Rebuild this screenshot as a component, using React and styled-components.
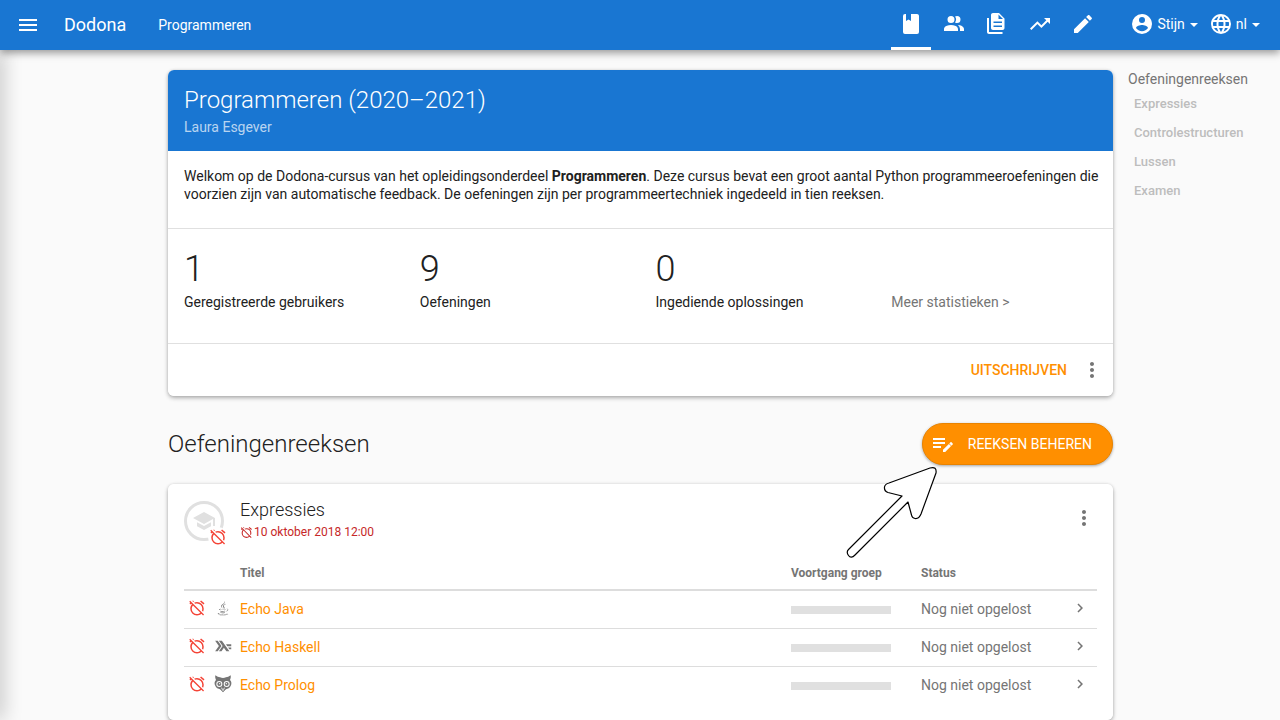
import React from "react";
import styled, { createGlobalStyle } from "styled-components";
import { MdMoreVert, MdChevronRight } from "react-icons/md";
import { DiJava } from "react-icons/di";

const GlobalStyle = createGlobalStyle`
  *, *::before, *::after { box-sizing: border-box; }
  html { overflow: hidden; height: 100%; }
  body {
    margin: 0;
    height: 100%;
    overflow: hidden;
    background: #fafafa;
    color: #212121;
    font: 14px/18px Roboto, sans-serif;
  }
  a { color: inherit; text-decoration: none; }
  button { font: inherit; border: 0; background: none; padding: 0; cursor: pointer; color: inherit; }
  h1, h2, h3, p, ul { margin: 0; padding: 0; font-weight: 400; list-style: none; }
  svg { display: block; flex: none; }
`;

const paths = {
  menu: "M3,6H21V8H3V6M3,11H21V13H3V11M3,16H21V18H3V16Z",
  book: "M18,22A2,2 0 0,0 20,20V4C20,2.89 19.1,2 18,2H12V9L9.5,7.5L7,9V2H6A2,2 0 0,0 4,4V20A2,2 0 0,0 6,22H18Z",
  users:
    "M16 17V19H2V17S2 13 9 13 16 17 16 17M12.5 7.5A3.5 3.5 0 1 0 9 11A3.5 3.5 0 0 0 12.5 7.5M15.94 13A5.32 5.32 0 0 1 18 17V19H22V17S22 13.37 15.94 13M15 4A3.39 3.39 0 0 0 13.07 4.59A5 5 0 0 1 13.07 10.41A3.39 3.39 0 0 0 15 11A3.5 3.5 0 0 0 15 4Z",
  files:
    "M14 1H8C6.900 1 6 1.900 6 3V16C6 17.100 6.900 18 8 18H17.500C18.600 18 19.500 17.100 19.500 16V6.500L14 1M17 15H8.500V13.500H17V15M17 11H8.500V9.500H17V11M13.500 7V2.500L18 7H13.500M2 6H4V20H17.500V22H4C2.900 22 2 21.100 2 20V6Z",
  trend:
    "M16,6L18.29,8.29L13.41,13.17L9.41,9.17L2,16.59L3.41,18L9.41,12L13.41,16L19.71,9.71L22,12V6H16Z",
  pencil:
    "M20.71,7.04C21.1,6.65 21.1,6 20.71,5.63L18.37,3.29C18,2.9 17.35,2.9 16.96,3.29L15.12,5.12L18.87,8.87M3,17.25V21H6.75L17.81,9.93L14.06,6.18L3,17.25Z",
  account:
    "M12,19.2C9.5,19.2 7.29,17.92 6,16C6.03,14 10,12.9 12,12.9C14,12.9 17.97,14 18,16C16.71,17.92 14.5,19.2 12,19.2M12,5A3,3 0 0,1 15,8A3,3 0 0,1 12,11A3,3 0 0,1 9,8A3,3 0 0,1 12,5M12,2A10,10 0 0,0 2,12A10,10 0 0,0 12,22A10,10 0 0,0 22,12C22,6.47 17.5,2 12,2Z",
  web: "M16.36,14C16.44,13.34 16.5,12.68 16.5,12C16.5,11.32 16.44,10.66 16.36,10H19.74C19.9,10.64 20,11.31 20,12C20,12.69 19.9,13.36 19.74,14M14.59,19.56C15.19,18.45 15.65,17.25 15.97,16H18.92C17.96,17.65 16.43,18.93 14.59,19.56M14.34,14H9.66C9.56,13.34 9.5,12.68 9.5,12C9.5,11.32 9.56,10.65 9.66,10H14.34C14.43,10.65 14.5,11.32 14.5,12C14.5,12.68 14.43,13.34 14.34,14M12,19.96C11.17,18.76 10.5,17.43 10.09,16H13.91C13.5,17.43 12.83,18.76 12,19.96M8,8H5.08C6.03,6.34 7.57,5.06 9.4,4.44C8.8,5.55 8.35,6.75 8,8M5.08,16H8C8.35,17.25 8.8,18.45 9.4,19.56C7.57,18.93 6.03,17.65 5.08,16M4.26,14C4.1,13.36 4,12.69 4,12C4,11.31 4.1,10.64 4.26,10H7.64C7.56,10.66 7.5,11.32 7.5,12C7.5,12.68 7.56,13.34 7.64,14M12,4.03C12.83,5.23 13.5,6.57 13.91,8H10.09C10.5,6.57 11.17,5.23 12,4.03M18.92,8H15.97C15.65,6.75 15.19,5.55 14.59,4.44C16.43,5.07 17.96,6.34 18.92,8M12,2C6.47,2 2,6.5 2,12A10,10 0 0,0 12,22A10,10 0 0,0 22,12A10,10 0 0,0 12,2Z",
  school: "M12,3L1,9L12,15L21,10.09V17H23V9M5,13.18V17.18L12,21L19,17.18V13.18L12,17L5,13.18Z",
  alarmOff:
    "M8,3.28L6.6,1.86L5.74,2.57L7.16,4M16.47,18.39C15.26,19.39 13.7,20 12,20A7,7 0 0,1 5,13C5,11.3 5.61,9.74 6.61,8.53M2.92,2.29L1.65,3.57L3,4.9L1.87,5.83L3.29,7.25L4.4,6.31L5.2,7.11C3.83,8.69 3,10.75 3,13A9,9 0 0,0 12,22C14.25,22 16.31,21.17 17.89,19.8L20.09,22L21.36,20.73L3.89,3.27L2.92,2.29M22,5.72L17.4,1.86L16.11,3.39L20.71,7.25L22,5.72M12,6A7,7 0 0,1 19,13C19,13.84 18.84,14.65 18.57,15.4L20.09,16.92C20.67,15.73 21,14.41 21,13A9,9 0 0,0 12,4C10.59,4 9.27,4.33 8.08,4.91L9.6,6.43C10.35,6.16 11.16,6 12,6Z",
  listEdit:
    "M2,6V8H14V6H2M2,10V12H14V10H2M20,10C19.800 10 19.600 10.100 19.500 10.300L18.300 11.500L20.500 13.700L21.700 12.500C22 12.200 22 11.800 21.700 11.500L20.500 10.300C20.400 10.100 20.200 10 20 10M17.900 11.900L12,17.800V20H14.200L20.100 14.100L17.900 11.900M2,14V16H10V14H2Z",
  haskell:
    "M1.500 5H5L10 12L5 19H1.500L6.500 12ZM6.500 5H10.500L20.500 19H16.500L13.200 14.400L10 19H6.500L11.500 12ZM16 9.800H23V12.200H17.700ZM18.800 14H23V16.400H20.500Z",
};

const Icon = ({ name, size = 24 }) => (
  <svg width={size} height={size} viewBox="0 0 24 24" fill="currentColor" aria-hidden="true">
    <path d={paths[name]} />
  </svg>
);

const Owl = ({ size }) => (
  <svg width={size} height={size} viewBox="0 0 54 54" aria-hidden="true">
    <path
      d="M4 1C9 5 14 6 18 7Q27 11 36 7C40 6 45 5 50 1C51 6 50 11 48 15C53 19 53 26 51 31C48 39 41 42 36 43L27 52L18 43C13 42 6 39 3 31C1 26 1 19 6 15C4 11 3 6 4 1Z"
      fill="currentColor"
    />
    <circle cx="16" cy="27" r="9" fill="#fff" />
    <circle cx="38" cy="27" r="9" fill="#fff" />
    <circle cx="16" cy="27" r="6" fill="currentColor" />
    <circle cx="38" cy="27" r="6" fill="currentColor" />
    <circle cx="17" cy="26" r="2" fill="#fff" />
    <circle cx="37" cy="26" r="2" fill="#fff" />
    <path d="M21 37L25 40L27 47L29 40L33 37L30 44L27 49L24 44Z" fill="#fff" />
  </svg>
);

const Haskell = ({ size }) => <Icon name="haskell" size={size} />;

const Page = styled.div`
  position: relative;
  min-height: 100vh;
`;

const NavBar = styled.header`
  position: relative;
  z-index: 2;
  display: flex;
  align-items: center;
  height: 50px;
  padding: 0 16px;
  background: #1976d2;
  color: #fff;
  box-shadow: 0 3px 8px rgba(0, 0, 0, 0.4);
`;

const Brand = styled.a`
  margin-left: 24px;
  font-size: 18px;
  line-height: 24px;
`;

const Crumb = styled.a`
  margin-left: 32px;
`;

const NavIcons = styled.nav`
  display: flex;
  gap: 3px;
  margin-left: auto;
`;

const NavItem = styled.a`
  display: flex;
  align-items: center;
  justify-content: center;
  width: 40px;
  height: 50px;
  padding-top: 1px;
  border-bottom: 3px solid ${(p) => (p.$active ? "#fff" : "transparent")};
`;

const UserNav = styled.div`
  display: flex;
  gap: 10px;
  margin-left: 27px;
  padding: 0 3px 2px 0;
`;

const MenuButton = styled.button`
  display: flex;
  align-items: center;
  gap: 3px;
`;

const Caret = styled.span`
  margin: 2px 1px 0 2px;
  border: 4px solid transparent;
  border-top-color: currentColor;
  border-bottom: 0;
`;

const DrawerShadow = styled.div`
  position: absolute;
  z-index: 1;
  top: 50px;
  bottom: 0;
  left: -8px;
  width: 8px;
  box-shadow: 0 0 20px rgba(0, 0, 0, 0.4);
`;

const Columns = styled.div`
  display: grid;
  grid-template-columns: minmax(0, 1fr) 152px;
  padding: 20px 0 0 168px;
`;

const Main = styled.main`
  margin-right: 15px;
`;

const Card = styled.section`
  overflow: hidden;
  background: #fff;
  border-radius: 6px;
`;

const CardShell = styled.div`
  border-radius: 6px;
  box-shadow: 0 2px 4px rgba(0, 0, 0, 0.3), 0 0 3px rgba(0, 0, 0, 0.1);
`;

const CardTitle = styled.div`
  height: 81px;
  padding: 14px 16px 0;
  background: #1976d2;
  color: #fff;
`;

const CourseName = styled.h1`
  font-size: 24px;
  line-height: 32px;
  font-weight: 300;
`;

const Teacher = styled.p`
  margin-top: 2px;
  color: rgba(255, 255, 255, 0.7);
`;

const Intro = styled.p`
  padding: 16px 12px 25px 16px;
`;

const Stats = styled.div`
  display: grid;
  grid-template-columns: repeat(4, 1fr);
  column-gap: 30px;
  align-items: end;
  height: 115px;
  padding: 0 16px 32px;
  border-top: 1px solid #e0e0e0;
`;

const StatNumber = styled.div`
  margin-bottom: 6px;
  font-size: 36px;
  line-height: 36px;
  font-weight: 300;
`;

const MoreLink = styled.a`
  color: #757575;
`;

const Actions = styled.div`
  display: flex;
  align-items: center;
  justify-content: flex-end;
  gap: 13px;
  height: 53px;
  padding-right: 9px;
  border-top: 1px solid #e0e0e0;
`;

const FlatButton = styled.button`
  color: #ff8f00;
  font-weight: 500;
  text-transform: uppercase;
`;

const IconButton = styled.button`
  color: #757575;
`;

const SectionHead = styled.div`
  display: flex;
  align-items: center;
  justify-content: space-between;
  height: 42px;
  margin: 27px 0 19px;
`;

const SectionName = styled.h2`
  font-size: 24px;
  line-height: 32px;
  font-weight: 300;
`;

const ButtonWrap = styled.div`
  position: relative;
`;

const PillButton = styled.button`
  display: flex;
  align-items: center;
  gap: 13px;
  height: 42px;
  padding: 0 20px 0 8px;
  border: 1px solid #e98300;
  border-radius: 21px;
  background: #ff8f00;
  color: #fff;
  text-transform: uppercase;
  box-shadow: 0 1px 3px rgba(0, 0, 0, 0.35);
`;

const Pointer = styled.svg`
  position: absolute;
  z-index: 1;
  top: 42px;
  right: 172px;
  pointer-events: none;
`;

const SeriesCard = styled(Card)`
  padding: 16px;
`;

const SeriesHead = styled.div`
  display: flex;
  height: 56px;
`;

const StatusBadge = styled.div`
  position: relative;
  display: flex;
  align-items: center;
  justify-content: center;
  width: 40px;
  height: 40px;
  margin: 1px 16px 0 0;
  border: 3px solid #e0e0e0;
  border-radius: 50%;
  color: #e0e0e0;
`;

const BadgeMark = styled.span`
  position: absolute;
  right: -7px;
  bottom: -9px;
  padding: 1px;
  border-radius: 50%;
  background: #fff;
  color: #f44336;
`;

const SeriesInfo = styled.div`
  flex: 1;
`;

const SeriesName = styled.h3`
  font-size: 18px;
  line-height: 20px;
  font-weight: 300;
`;

const Deadline = styled.div`
  display: flex;
  align-items: center;
  gap: 1px;
  margin-top: 3px;
  font-size: 12px;
  color: #c62828;
`;

const SeriesMenu = styled(IconButton)`
  align-self: flex-start;
  margin: 6px 1px 0 0;
`;

const Exercises = styled.table`
  width: 100%;
  border-collapse: collapse;
  table-layout: fixed;
  color: #757575;
`;

const Col = styled.col`
  width: ${(p) => p.$w};
`;

const HeadCell = styled.th`
  height: 34px;
  padding: 0;
  border-bottom: 2px solid #ddd;
  text-align: left;
  font-size: 12px;
  font-weight: 700;
`;

const Row = styled.tr`
  & + & td { border-top: 1px solid #ddd; }
`;

const Cell = styled.td`
  height: 38px;
  padding: 0;
`;

const IconCell = styled(Cell)`
  padding: 0 0 2px;
`;

const AlarmCell = styled(IconCell)`
  padding-left: 4px;
  color: #f44336;
`;

const ExerciseLink = styled.a`
  && { color: #ff8f00; }
`;

const Progress = styled.div`
  width: 100px;
  height: 8px;
  margin-top: 1px;
  background: #e0e0e0;
`;

const Contents = styled.aside`
  color: #757575;
`;

const ContentsLink = styled.a`
  display: block;
  padding: 7px 6px 5px;
  line-height: 17px;
  font-size: 13px;
  font-weight: 500;
  && { color: #bdbdbd; }
`;

const navItems = [
  ["book", "Cursus"],
  ["users", "Gebruikers"],
  ["files", "Oplossingen"],
  ["trend", "Statistieken"],
  ["pencil", "Bewerken"],
];

const stats = [
  ["1", "Geregistreerde gebruikers"],
  ["9", "Oefeningen"],
  ["0", "Ingediende oplossingen"],
];

const exercises = [
  { title: "Echo Java", Lang: DiJava },
  { title: "Echo Haskell", Lang: Haskell },
  { title: "Echo Prolog", Lang: Owl },
];

export default function App() {
  return (
    <Page>
      <GlobalStyle />
      <NavBar>
        <button aria-label="Menu"><Icon name="menu" /></button>
        <Brand href="#">Dodona</Brand>
        <Crumb href="#">Programmeren</Crumb>
        <NavIcons>
          {navItems.map(([name, label], i) => (
            <NavItem key={name} href="#" aria-label={label} $active={i === 0}>
              <Icon name={name} />
            </NavItem>
          ))}
        </NavIcons>
        <UserNav>
          <MenuButton><Icon name="account" />Stijn<Caret /></MenuButton>
          <MenuButton><Icon name="web" />nl<Caret /></MenuButton>
        </UserNav>
      </NavBar>
      <DrawerShadow />
      <Columns>
        <Main>
          <CardShell>
            <Card>
              <CardTitle>
                <CourseName>Programmeren (2020–2021)</CourseName>
                <Teacher>Laura Esgever</Teacher>
              </CardTitle>
              <Intro>
                Welkom op de Dodona-cursus van het opleidingsonderdeel <b>Programmeren</b>. Deze cursus
                bevat een groot aantal Python programmeeroefeningen die voorzien zijn van automatische
                feedback. De oefeningen zijn per programmeertechniek ingedeeld in tien reeksen.
              </Intro>
              <Stats>
                {stats.map(([value, label]) => (
                  <div key={label}>
                    <StatNumber>{value}</StatNumber>
                    {label}
                  </div>
                ))}
                <MoreLink href="#">Meer statistieken &gt;</MoreLink>
              </Stats>
              <Actions>
                <FlatButton>Uitschrijven</FlatButton>
                <IconButton aria-label="Meer acties"><MdMoreVert size={24} /></IconButton>
              </Actions>
            </Card>
          </CardShell>
          <SectionHead>
            <SectionName>Oefeningenreeksen</SectionName>
            <ButtonWrap>
              <PillButton><Icon name="listEdit" />Reeksen beheren</PillButton>
              <Pointer width="96" height="96" viewBox="0 0 96 96" aria-hidden="true">
                <path
                  d="M3.500 84.500L57 31L43 27.500Q39 26 39.500 22Q40 19 44 18L85 3Q92 1 91 8L76 49Q74 54 70 53.500Q67 53 66.500 50L63 37L10 90Q6 94 3.500 90.500Q1 87 3.500 84.500Z"
                  fill="#fff" stroke="#000" strokeWidth="1.200" strokeLinejoin="round"
                />
              </Pointer>
            </ButtonWrap>
          </SectionHead>
          <CardShell>
            <SeriesCard>
              <SeriesHead>
                <StatusBadge>
                  <Icon name="school" />
                  <BadgeMark><Icon name="alarmOff" size={18} /></BadgeMark>
                </StatusBadge>
                <SeriesInfo>
                  <SeriesName>Expressies</SeriesName>
                  <Deadline><Icon name="alarmOff" size={13} />10 oktober 2018 12:00</Deadline>
                </SeriesInfo>
                <SeriesMenu aria-label="Reeksacties"><MdMoreVert size={24} /></SeriesMenu>
              </SeriesHead>
              <Exercises>
                <colgroup>
                  <Col $w="30px" /><Col $w="26px" /><Col $w="auto" /><Col $w="130px" /><Col $w="150px" /><Col $w="26px" />
                </colgroup>
                <thead>
                  <tr>
                    <HeadCell /><HeadCell /><HeadCell>Titel</HeadCell>
                    <HeadCell>Voortgang groep</HeadCell><HeadCell>Status</HeadCell><HeadCell />
                  </tr>
                </thead>
                <tbody>
                  {exercises.map(({ title, Lang }) => (
                    <Row key={title}>
                      <AlarmCell><Icon name="alarmOff" size={18} /></AlarmCell>
                      <IconCell><Lang size={18} /></IconCell>
                      <Cell><ExerciseLink href="#">{title}</ExerciseLink></Cell>
                      <Cell><Progress /></Cell>
                      <Cell>Nog niet opgelost</Cell>
                      <IconCell><MdChevronRight size={18} /></IconCell>
                    </Row>
                  ))}
                </tbody>
              </Exercises>
            </SeriesCard>
          </CardShell>
        </Main>
        <Contents>
          Oefeningenreeksen
          {["Expressies", "Controlestructuren", "Lussen", "Examen"].map((t) => (
            <ContentsLink key={t} href="#">{t}</ContentsLink>
          ))}
        </Contents>
      </Columns>
    </Page>
  );
}
